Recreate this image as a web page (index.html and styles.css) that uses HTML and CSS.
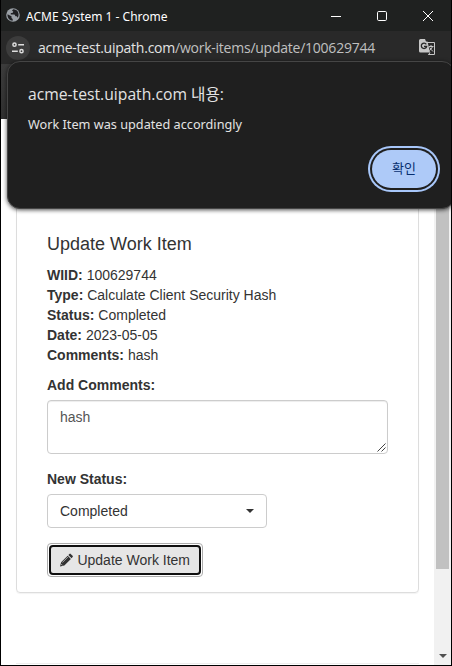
FILE: index.html
```html
<!DOCTYPE html>
<html lang="ko">
<head>
<meta charset="utf-8">
<title>ACME System 1</title>
<link rel="stylesheet" href="styles.css">
</head>
<body>
<div class="window">
  <header class="titlebar">
    <svg class="globe" width="14" height="14" viewBox="0 0 14 14"><circle cx="7" cy="7" r="6.8" fill="#9aa0a6"/><path d="M1.5 6.2 5.5 8.3v1.8l1.2 1v1.6C3.4 12.500 1.200 9.800 1.500 6.200ZM7.200 1.300 6 2.700 7.300 3.500 6.500 5H4.800v1.500h3.700l1 1.700h1.300l.8 1.600C13.500 7 12.700 2.300 8.700 1.500Z" fill="#202124"/></svg>
    <span class="window-title">ACME System 1 - Chrome</span>
    <svg class="controls" width="104" height="12" viewBox="0 0 104 12" fill="none" stroke="#fff"><path d="M0 6.500h10"/><rect x="46.500" y="1.500" width="9" height="9" rx="1.200"/><path d="m92 1 10 10M102 1 92 11"/></svg>
  </header>
  <div class="addressbar">
    <span class="site-info"><svg width="12" height="12" viewBox="0 0 12 12" fill="none" stroke="#dedede" stroke-width="1.500"><circle cx="2.500" cy="2.700" r="1.600"/><path d="M6.200 2.700H12M0 9.200h5.800"/><circle cx="9.500" cy="9.200" r="1.600"/></svg></span>
    <span class="url"><span class="domain">acme-test.uipath.com</span><span class="path">/work-items/update/100629744</span></span>
    <svg class="translate" width="17" height="17" viewBox="0 0 17 17"><path d="M8 3.500h7.500v12H9.500" fill="none" stroke="#c7c7c7"/><path d="M1.500 0H6l1 2.500h1.500L11 13.500H1.500Q0 13.500 0 12V1.500Q0 0 1.500 0Z" fill="#c7c7c7"/><path d="M7.300 5.300A2.700 2.700 0 1 0 7.700 7.300H5" fill="none" stroke="#292929" stroke-width="1.300"/><path d="M9.800 7.500h4.700M12 6v1.500M13.500 7.500q-.7 2.500-3 4M10.700 8.500q1.300 2 3.300 4M9.500 16l1.500-2.500" fill="none" stroke="#c7c7c7"/></svg>
  </div>
  <div class="viewport">
    <main class="page">
      <div class="navbar"></div>
      <section class="panel">
        <h4>Update Work Item</h4>
        <p class="details">
          <b>WIID:</b> 100629744<br>
          <b>Type:</b> Calculate Client Security Hash<br>
          <b>Status:</b> Completed<br>
          <b>Date:</b> 2023-05-05<br>
          <b>Comments:</b> hash
        </p>
        <div class="label">Add Comments:</div>
        <div class="comments">hash
          <svg class="grip" width="9" height="9" viewBox="0 0 9 9" stroke="#444"><path d="M.5 8.500l8-8M4.500 8.500l4-4"/></svg>
        </div>
        <div class="label">New Status:</div>
        <div class="select"><span>Completed</span><i class="caret"></i></div>
        <div class="submit"><div class="submit-face"><svg width="14" height="14" viewBox="0 0 14 14" fill="#333"><path d="M0 14 1.200 9.400 8.300 2.300l3.500 3.500-7.100 7.100ZM9 1.600l1.200-1.200q.7-.7 1.400 0l2 2q.7.700 0 1.400L12.500 5.100Z"/><path d="m2.500 9.800 6-6M1.200 11.300l1.500 1.500" stroke="#e6e6e6" stroke-width=".7"/></svg><span>Update Work Item</span></div></div>
      </section>
      <div class="footer-rule"></div>
    </main>
    <div class="scrollbar"><div class="thumb"></div><i class="arrow"></i></div>
  </div>
  <div class="dialog">
    <div class="dialog-title">acme-test.uipath.com 내용:</div>
    <div class="dialog-message">Work Item was updated accordingly</div>
    <div class="ok">확인</div>
  </div>
</div>
</body>
</html>
```
FILE: styles.css
```css
* { box-sizing: border-box; }
body { margin: 0; }
.window {
  position: relative;
  display: flex;
  flex-direction: column;
  width: 452px;
  height: 666px;
  overflow: hidden;
  border: 1px solid #000;
  border-top: 0;
  background: #fff;
  font-family: "Open Sans", "Noto Sans CJK KR", sans-serif;
}
.titlebar {
  display: flex;
  align-items: center;
  height: 31px;
  padding: 0 16px 0 5px;
  background: #1f2120;
  color: #fff;
}
.globe { margin-bottom: 2px; }
.window-title {
  margin-left: 6px;
  padding-top: 2px;
  font-family: "Noto Sans", sans-serif;
  font-size: 12px;
  line-height: 16px;
  white-space: nowrap;
}
.controls { margin-left: auto; }
.addressbar {
  display: flex;
  align-items: center;
  height: 34px;
  padding: 0 15px 0 5px;
  background: #292929;
  border-bottom: 1px solid #3b3b3b;
}
.site-info {
  display: flex;
  align-items: center;
  justify-content: center;
  width: 24px;
  height: 24px;
  border-radius: 50%;
  background: #3c3c3c;
}
.url {
  margin-left: 8px;
  font-size: 14px;
  letter-spacing: -.24px;
  white-space: nowrap;
}
.domain { color: #e3e3e3; }
.path { color: #c0c0c0; }
.translate { margin-left: auto; }
.viewport { display: flex; flex: 1; }
.page {
  flex: 1;
  font: 14px/20px "Liberation Sans", sans-serif;
  color: #333;
}
.navbar { height: 54px; background: linear-gradient(#3c3c3c, #303030); }
.panel {
  width: 403px;
  height: 403px;
  margin: 71px 0 0 15px;
  padding: 43px 30px 15px;
  border: 1px solid #ddd;
  border-radius: 4px;
  box-shadow: 0 1px 1px rgba(0,0,0,.05);
}
h4 { margin: 0 0 10px; font-size: 18px; font-weight: 400; line-height: 20px; }
.details { margin: 0 0 10px; padding-top: 1px; }
.label { margin-bottom: 5px; font-weight: 700; }
.comments {
  position: relative;
  height: 54px;
  margin-bottom: 15px;
  padding: 6px 12px;
  border: 1px solid #ccc;
  border-radius: 4px;
  box-shadow: inset 0 1px 1px rgba(0,0,0,.075);
  color: #555;
}
.grip { position: absolute; right: 1px; bottom: 1px; }
.select {
  display: flex;
  align-items: center;
  justify-content: space-between;
  width: 220px;
  height: 34px;
  margin-bottom: 15px;
  padding: 0 12px;
  border: 1px solid #ccc;
  border-radius: 4px;
}
.caret { border: 4px solid transparent; border-top-color: #333; border-bottom: 0; }
.submit {
  width: 156px;
  height: 34px;
  padding: 1px;
  border: 1px solid #adadad;
  border-radius: 4px;
  background: #fff;
}
.submit-face {
  display: flex;
  align-items: center;
  gap: 4.500px;
  height: 30px;
  padding: 0 9px;
  border: 2px solid #101010;
  border-radius: 4px;
  background: #e6e6e6;
  white-space: nowrap;
}
.footer-rule { width: 403px; margin: 70px 0 0 15px; border-top: 1px solid #eee; }
.scrollbar {
  display: flex;
  flex-direction: column;
  align-items: center;
  justify-content: space-between;
  width: 17px;
  padding: 17px 0 7px;
  background: #f1f1f1;
}
.thumb { width: 13px; height: 487px; background: #c1c1c1; }
.arrow { border: 4px solid transparent; border-top-color: #505050; border-bottom: 0; }
.dialog {
  position: absolute;
  left: 6px;
  top: 61px;
  width: 448px;
  height: 148px;
  padding: 20px 19px 17px 20px;
  border: 1px solid #454545;
  border-radius: 13px;
  background: #1f1f1f;
  box-shadow: 0 1px 4px rgba(0,0,0,.7);
  color: #e3e3e3;
}
.dialog-title { height: 24px; font-size: 15.7px; line-height: 24px; white-space: nowrap; }
.dialog-message { margin-top: 8px; font-family: "Noto Sans", sans-serif; font-size: 12.7px; line-height: 20px; white-space: nowrap; }
.ok {
  width: 64px;
  height: 38px;
  margin: 16px -1px 0 auto;
  border-radius: 19px;
  background: #aecaf8;
  box-shadow: 0 0 0 2px #1f1f1f, 0 0 0 4px #a8c7fa;
  color: #062e6f;
  font-size: 13px;
  line-height: 37px;
  text-align: center;
}
```
